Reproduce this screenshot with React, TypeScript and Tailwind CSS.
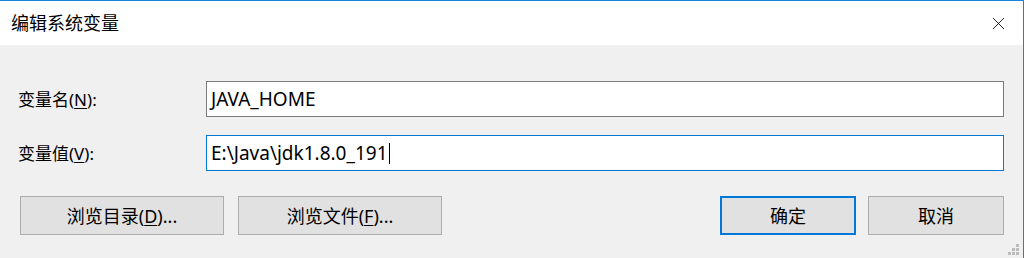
import { X } from "lucide-react";

const font = { fontFamily: '"Noto Sans", "Noto Sans CJK SC", sans-serif' };

function Btn({ children, primary }: { children: React.ReactNode; primary?: boolean }) {
  return (
    <button
      className={`h-[39px] bg-[#e1e1e1] text-[18px] leading-none text-black ${
        primary ? "border-2 border-[#0078d7]" : "border border-[#adadad]"
      }`}
    >
      {children}
    </button>
  );
}

function EnvDialog() {
  return (
    <div
      className="w-[1024px] h-[258px] relative bg-[#f0f0f0] border-t border-r border-[#1883d7] flex flex-col text-black"
      style={font}
    >
      {/* TITLE BAR */}
      <div className="h-[44px] bg-white flex items-center justify-between pl-[11px] pr-[14px] shrink-0">
        <span className="text-[18px] leading-none pb-[1px]">编辑系统变量</span>
        <X size={21} strokeWidth={1} className="text-black" />
      </div>

      {/* FIELDS */}
      <div className="flex flex-col gap-[18px] pt-[36px] pl-[18px] pr-[19px]">
        <div className="flex items-center">
          <label className="w-[188px] text-[17px] leading-none">
            变量名(<span className="underline underline-offset-2">N</span>):
          </label>
          <div className="flex-1 h-[36px] bg-white border border-[#7a7a7a] flex items-center pl-[4px] text-[19px]">
            JAVA_HOME
          </div>
        </div>
        <div className="flex items-center">
          <label className="w-[188px] text-[17px] leading-none">
            变量值(<span className="underline underline-offset-2">V</span>):
          </label>
          <div className="flex-1 h-[36px] bg-white border border-[#0078d7] flex items-center pl-[4px] text-[19px]">
            E:\Java\jdk1.8.0_191
            <span className="inline-block w-px h-[21px] bg-black ml-[1px]" />
          </div>
        </div>
      </div>

      {/* BUTTONS */}
      <div className="flex justify-between pt-[25px] pl-[20px] pr-[19px]">
        <div className="flex gap-[14px]">
          <div className="w-[204px] grid">
            <Btn>
              浏览目录(<span className="underline underline-offset-2">D</span>)...
            </Btn>
          </div>
          <div className="w-[204px] grid">
            <Btn>
              浏览文件(<span className="underline underline-offset-2">F</span>)...
            </Btn>
          </div>
        </div>
        <div className="flex gap-[12px]">
          <div className="w-[136px] grid">
            <Btn primary>确定</Btn>
          </div>
          <div className="w-[136px] grid">
            <Btn>取消</Btn>
          </div>
        </div>
      </div>

      {/* resize grip */}
      <svg className="absolute right-[3px] bottom-[2px]" width="12" height="12" viewBox="0 0 12 12">
        <rect x="8" y="0" width="3" height="3" fill="#bcbcbc" />
        <rect x="4" y="4" width="3" height="3" fill="#bcbcbc" />
        <rect x="8" y="4" width="3" height="3" fill="#bcbcbc" />
        <rect x="0" y="8" width="3" height="3" fill="#bcbcbc" />
        <rect x="4" y="8" width="3" height="3" fill="#bcbcbc" />
        <rect x="8" y="8" width="3" height="3" fill="#bcbcbc" />
      </svg>
    </div>
  );
}

export default function App() {
  return <EnvDialog />;
}
